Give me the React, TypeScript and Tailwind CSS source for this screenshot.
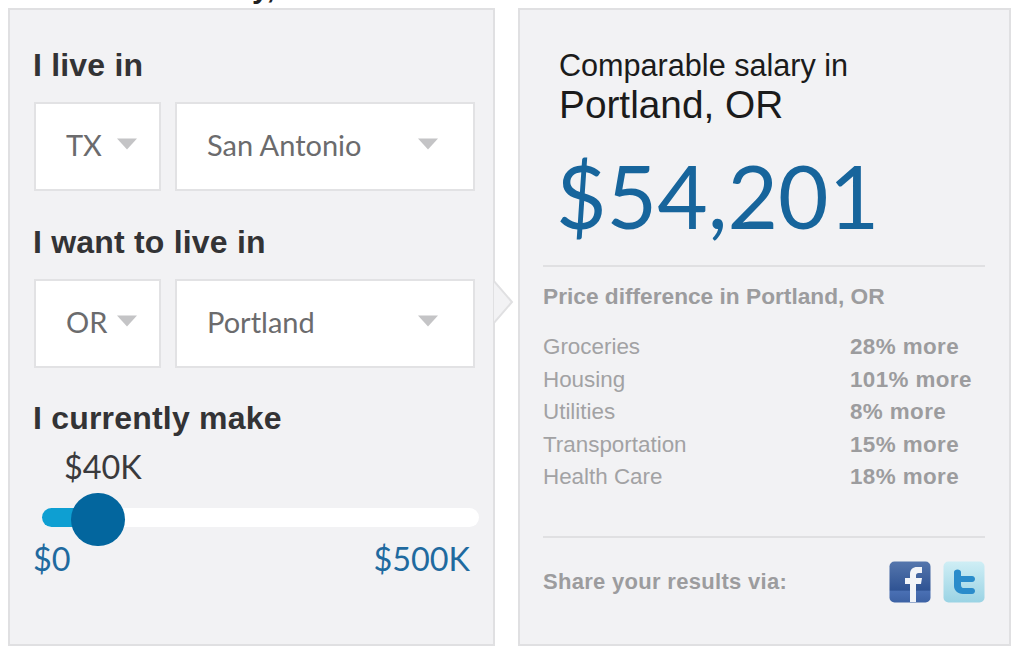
import React from "react";

const sans = "font-['Liberation_Sans',Arial,sans-serif]";
const lato = "font-['Lato',sans-serif]";

function Caret() {
  return (
    <svg width="20" height="12" viewBox="0 0 20 12" className="shrink-0">
      <path d="M0 0.5H20L10 11.5Z" fill="#c4c4c6" />
    </svg>
  );
}

function Select({ label, wide, caretGap }: { label: string; wide?: boolean; caretGap?: string }) {
  return (
    <div
      className={`h-[89px] bg-white border-2 border-[#e2e2e4] flex items-center ${lato} text-[29px] text-[#6b6b6d] ${
        wide ? "w-[300px] pl-[30px] pr-[35px] justify-between" : `w-[127px] pl-[30px] ${caretGap ?? "gap-[15px]"}`
      }`}
    >
      <span className="leading-none -mt-[4px]">{label}</span>
      <span className="-mt-[6px] flex">
        <Caret />
      </span>
    </div>
  );
}

function Heading({ children }: { children: React.ReactNode }) {
  return <h2 className={`${sans} font-bold text-[32px] leading-[36px] tracking-[0.2px] text-[#333335]`}>{children}</h2>;
}

function Row({ name, value }: { name: string; value: string }) {
  return (
    <div className={`flex h-[32.4px] items-center ${sans} text-[22.4px] text-[#a2a2a4]`}>
      <span className="w-[307px]">{name}</span>
      <span className="font-bold text-[#9c9c9e] tracking-[0.4px]">{value}</span>
    </div>
  );
}

function Facebook() {
  return (
    <svg width="42" height="42" viewBox="0 0 42 42">
      <defs>
        <linearGradient id="fb" x1="0" y1="0" x2="0" y2="1">
          <stop offset="0" stopColor="#5576ad" />
          <stop offset="0.7" stopColor="#2f5393" />
          <stop offset="0.72" stopColor="#4a70b4" />
          <stop offset="1" stopColor="#3d62a4" />
        </linearGradient>
      </defs>
      <rect x="0.5" y="0.5" width="41" height="41" rx="5" fill="url(#fb)" />
      <path
        d="M21 41V23H16V17H21V13C21 8.5 24 6 28 6H33V12H29.5C27.8 12 27 13 27 14.5V17H33L32 23H27V41Z"
        fill="#f2f4f8"
      />
    </svg>
  );
}

function Twitter() {
  return (
    <svg width="42" height="42" viewBox="0 0 42 42">
      <defs>
        <linearGradient id="tw" x1="0" y1="0" x2="0" y2="1">
          <stop offset="0" stopColor="#cfeef5" />
          <stop offset="1" stopColor="#9ad3e4" />
        </linearGradient>
      </defs>
      <rect x="0.5" y="0.5" width="41" height="41" rx="5" fill="url(#tw)" />
      <path
        d="M11 11C11 7.5 18 7.5 18 11V15H29C33 15 33 21 29 21H18V24C18 26.5 19.5 27 21 27H29C33 27 33 33 29 33H20C14.5 33 11 29 11 25Z"
        fill="#2a8ccb"
      />
    </svg>
  );
}

export default function App() {
  return (
    <div className="w-[1024px] h-[663px] bg-white overflow-hidden">
      <div className="h-[8px] overflow-hidden pl-[252px]">
        <div className={`${sans} font-bold text-[30px] leading-[36px] text-[#222] -mt-[30px]`}>y,</div>
      </div>
      <div className="flex pl-[8px] gap-[23px]">
        <div className="relative w-[487px] h-[638px] bg-[#f2f2f4] border-2 border-[#e0e0e2] pl-[23px] pt-[37px]">
          <Heading>I live in</Heading>
          <div className="flex gap-[14px] mt-[19px] ml-[1px]">
            <Select label="TX" />
            <Select label="San Antonio" wide />
          </div>
          <div className="mt-[33px]">
            <Heading>I want to live in</Heading>
          </div>
          <div className="flex gap-[14px] mt-[19px] ml-[1px]">
            <Select label="OR" caretGap="gap-[10px]" />
            <Select label="Portland" wide />
          </div>
          <div className="mt-[32px]">
            <Heading>I currently make</Heading>
          </div>
          <div className={`${lato} text-[32.4px] leading-[36px] text-[#3a3a3c] ml-[31px] mt-[13px]`}>$40K</div>
          <div className="relative w-[437px] h-[19px] ml-[9px] mt-[23px] bg-white rounded-full">
            <div className="w-[40px] h-[19px] bg-[#0e9fd2] rounded-l-full" />
            <div className="absolute left-[29px] -top-[15px] w-[54px] h-[53px] rounded-full bg-[#03669e]" />
          </div>
          <div className={`flex justify-between w-[437px] ${lato} text-[32.4px] leading-[36px] text-[#1f6a9f] mt-[14px]`}>
            <span>$0</span>
            <span>$500K</span>
          </div>
          <svg
            width="22"
            height="44"
            viewBox="0 0 22 44"
            className="absolute left-[483px] top-[270px]"
          >
            <path d="M0 0L19 22L0 44Z" fill="#f2f2f4" stroke="#e0e0e2" strokeWidth="2" />
          </svg>
        </div>
        <div className="w-[493px] h-[638px] bg-[#f2f2f4] border-2 border-[#e0e0e2] pl-[23px] pt-[37px]">
          <div className="pl-[16px]">
            <div className={`${sans} text-[30.6px] leading-[36px] text-[#1b1b1b]`}>Comparable salary in</div>
            <div className={`${sans} text-[38.8px] leading-[43px] text-[#1b1b1b]`}>Portland, OR</div>
            <div className={`${lato} text-[87.2px] leading-[110px] text-[#17659c] mt-[15px] -ml-[3px]`}>$54,201</div>
          </div>
          <div className="w-[442px] border-t-2 border-[#e0e0e2] mt-[14px] pt-[16px]">
            <div className={`${sans} font-bold text-[22.7px] leading-[26px] text-[#9c9c9e]`}>
              Price difference in Portland, OR
            </div>
            <div className="mt-[22px]">
              <Row name="Groceries" value="28% more" />
              <Row name="Housing" value="101% more" />
              <Row name="Utilities" value="8% more" />
              <Row name="Transportation" value="15% more" />
              <Row name="Health Care" value="18% more" />
            </div>
          </div>
          <div className="w-[442px] border-t-2 border-[#e0e0e2] mt-[43px] pt-[23px] flex justify-between items-center">
            <span className={`${sans} font-bold text-[22px] text-[#9c9c9e] tracking-[0.3px]`}>Share your results via:</span>
            <span className="flex gap-[12px]">
              <Facebook />
              <Twitter />
            </span>
          </div>
        </div>
      </div>
    </div>
  );
}
